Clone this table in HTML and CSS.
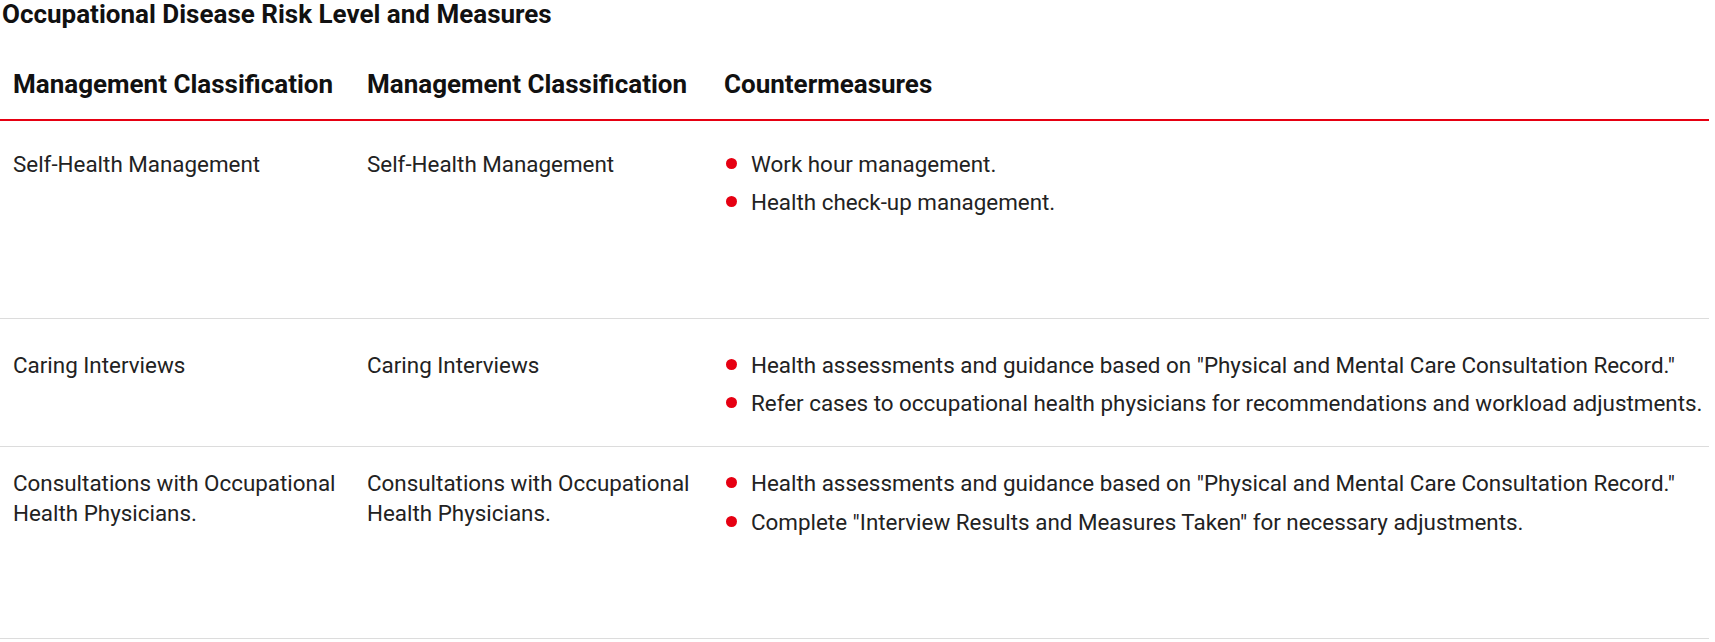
FILE: index.html
```html
<!DOCTYPE html>
<html lang="en">
<head>
<meta charset="utf-8">
<title>Occupational Disease Risk Level and Measures</title>
<link rel="stylesheet" href="styles.css">
</head>
<body>
<section class="risk">
  <h2 class="risk__title">Occupational Disease Risk Level and Measures</h2>
  <div class="risk__table">
    <div class="row row--head">
      <div class="cell">Management Classification</div>
      <div class="cell">Management Classification</div>
      <div class="cell cell--measures">Countermeasures</div>
    </div>
    <div class="row row--one">
      <div class="cell">Self-Health Management</div>
      <div class="cell">Self-Health Management</div>
      <div class="cell cell--measures">
        <ul class="bullets">
          <li>Work hour management.</li>
          <li>Health check-up management.</li>
        </ul>
      </div>
    </div>
    <div class="row row--two">
      <div class="cell">Caring Interviews</div>
      <div class="cell">Caring Interviews</div>
      <div class="cell cell--measures">
        <ul class="bullets">
          <li>Health assessments and guidance based on "Physical and Mental Care Consultation Record."</li>
          <li>Refer cases to occupational health physicians for recommendations and workload adjustments.</li>
        </ul>
      </div>
    </div>
    <div class="row row--three">
      <div class="cell">Consultations with Occupational Health Physicians.</div>
      <div class="cell">Consultations with Occupational Health Physicians.</div>
      <div class="cell cell--measures">
        <ul class="bullets bullets--loose">
          <li>Health assessments and guidance based on "Physical and Mental Care Consultation Record."</li>
          <li>Complete "Interview Results and Measures Taken" for necessary adjustments.</li>
        </ul>
      </div>
    </div>
  </div>
</section>
</body>
</html>
```

FILE: styles.css
```css
html, body {
  margin: 0;
  padding: 0;
  background: #fff;
}

body {
  font-family: Roboto, "Liberation Sans", sans-serif;
  color: #222;
}

.risk {
  width: 1709px;
}

.risk__title {
  margin: 0;
  font-size: 26px;
  line-height: 28px;
  font-weight: 700;
  color: #111;
  padding-left: 2px;
}

.risk__table {
  margin-top: 21px;
}

.row {
  display: grid;
  grid-template-columns: 354px 357px 1fr;
  border-bottom: 1px solid #dcdcdc;
  box-sizing: border-box;
  font-size: 22.4px;
  line-height: 30px;
}

.row--head {
  border-bottom: 2px solid #e60012;
  padding: 20px 0 20px;
  font-size: 26px;
  font-weight: 700;
  color: #111;
}

.row--one {
  padding-top: 28px;
  min-height: 198px;
}

.row--two {
  padding: 31px 0 28px;
}

.row--three {
  padding-top: 21px;
  min-height: 192px;
}

.cell {
  padding: 0 16px 0 13px;
}

.cell--measures {
  padding-right: 0;
}

.bullets {
  list-style: none;
  margin: 0;
  padding: 0;
  display: flex;
  flex-direction: column;
  gap: 8px;
}

.bullets--loose {
  gap: 9px;
}

.bullets li {
  position: relative;
  padding-left: 27px;
}

.bullets li::before {
  content: "";
  position: absolute;
  left: 2px;
  top: 9px;
  width: 11px;
  height: 11px;
  border-radius: 50%;
  background: #e60012;
}
```
